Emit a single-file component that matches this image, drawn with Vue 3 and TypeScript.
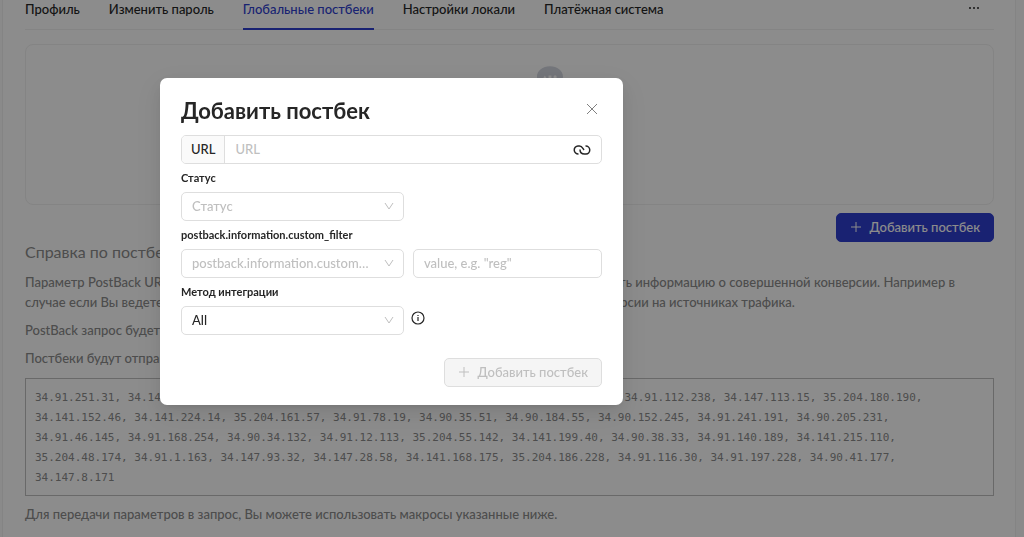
<script setup lang="ts">
import { ref } from 'vue'

interface Tab {
  id: string
  label: string
}

const tabs: Tab[] = [
  { id: 'profile', label: 'Профиль' },
  { id: 'password', label: 'Изменить пароль' },
  { id: 'postbacks', label: 'Глобальные постбеки' },
  { id: 'locale', label: 'Настройки локали' },
  { id: 'payment', label: 'Платёжная система' },
]
const activeTab = ref('postbacks')

const addresses: string[] = [
  '34.91.251.31, 34.141.197.120, 34.141.216.105, 34.90.42.17, 34.147.110.22, 35.204.19.168, 34.91.112.238, 34.147.113.15, 35.204.180.190,',
  '34.141.152.46, 34.141.224.14, 35.204.161.57, 34.91.78.19, 34.90.35.51, 34.90.184.55, 34.90.152.245, 34.91.241.191, 34.90.205.231,',
  '34.91.46.145, 34.91.168.254, 34.90.34.132, 34.91.12.113, 35.204.55.142, 34.141.199.40, 34.90.38.33, 34.91.140.189, 34.141.215.110,',
  '35.204.48.174, 34.91.1.163, 34.147.93.32, 34.147.28.58, 34.141.168.175, 35.204.186.228, 34.91.116.30, 34.91.197.228, 34.90.41.177,',
  '34.147.8.171',
]

const url = ref('')
const status = ref('')
const filter = ref('')
const filterValue = ref('')
const method = ref('all')
</script>

<template>
  <div class="page">
    <main class="panel">
      <nav class="tabs">
        <button
          v-for="tab in tabs"
          :key="tab.id"
          type="button"
          class="tab"
          :class="{ active: tab.id === activeTab }"
          @click="activeTab = tab.id"
        >{{ tab.label }}</button>
        <button type="button" class="more" aria-label="Ещё">
          <svg width="12" height="4" viewBox="0 0 12 4"><circle cx="2" cy="2" r="1" /><circle cx="6" cy="2" r="1" /><circle cx="10" cy="2" r="1" /></svg>
        </button>
      </nav>

      <section class="empty">
        <svg class="art" width="106" height="88" viewBox="0 0 184 152" aria-hidden="true">
          <ellipse cx="92" cy="138" rx="68" ry="13" fill="#f5f5f7" />
          <path d="M122 70 102 45Q100 43 97 43H56Q53 43 51 45L31 70V84H122Z" fill="#aeb8c2" />
          <path d="M34 72H60Q63 72 64 76 65 84 70 84H114Q119 84 120 76 121 72 124 72H150V126Q150 132 144 132H40Q34 132 34 126Z" fill="#dce0e6" />
          <path d="M149.1 33.3 142.3 35.9A1 1 0 0 1 141 34.7L142.9 28.5C140.3 25.6 138.8 22 138.8 18.1 138.8 8.1 148.9 0 161.4 0S184 8.1 184 18.1 173.9 36.2 161.4 36.2C156.9 36.2 152.7 35.1 149.1 33.3Z" fill="#d3d6e0" />
          <circle cx="170.3" cy="18.5" r="2.8" fill="#fff" />
          <path d="M155.4 21H149.6L152.5 16.1ZM158.9 16.1H163.9V21H158.9Z" fill="#fff" />
        </svg>
      </section>

      <div class="actions">
        <button type="button" class="btn primary">
          <svg width="12" height="12" viewBox="0 0 12 12"><path d="M6 1v10M1 6h10" /></svg>
          <span>Добавить постбек</span>
        </button>
      </div>

      <article class="help">
        <h2>Справка по постбекам</h2>
        <p>
          Параметр PostBack URL используется для того, чтоб наша система могла автоматически передавать информацию о совершенной конверсии. Например в<br>
          случае если Вы ведете учёт в собственной системе и хотите видеть у себя все поступившие конверсии на источниках трафика.
        </p>
        <p>PostBack запрос будет отправлен методом GET.</p>
        <p>Постбеки будут отправлены с IP адресов:</p>
        <pre>{{ addresses.join('\n') }}</pre>
        <p>Для передачи параметров в запрос, Вы можете использовать макросы указанные ниже.</p>
      </article>
    </main>

    <div class="overlay">
      <form class="modal" role="dialog" aria-modal="true" aria-labelledby="modal-title" @submit.prevent>
        <header>
          <h1 id="modal-title">Добавить постбек</h1>
          <button type="button" class="close" aria-label="Закрыть">
            <svg width="12" height="12" viewBox="0 0 12 12"><path d="M1 1 11 11M11 1 1 11" /></svg>
          </button>
        </header>

        <div class="url-field">
          <label for="url">URL</label>
          <input id="url" v-model="url" type="text" placeholder="URL">
          <svg width="18" height="12" viewBox="0 0 18 12" aria-hidden="true">
            <path d="M5.500 10A4 4 0 0 1 5 2H6.500C9 2 9.500 4 11 6" />
            <path d="M12.500 2A4 4 0 0 1 13 10H11.500C9 10 7 8.500 7 5.500" />
          </svg>
        </div>

        <label class="caption" for="status">Статус</label>
        <div class="row">
          <div class="select">
            <select id="status" v-model="status" :class="{ blank: !status }">
              <option value="">Статус</option>
            </select>
            <svg width="10" height="8" viewBox="0 0 10 8"><path d="M1 1 5 7 9 1" /></svg>
          </div>
        </div>

        <label class="caption" for="filter">postback.information.custom_filter</label>
        <div class="row">
          <div class="select">
            <select id="filter" v-model="filter" :class="{ blank: !filter }">
              <option value="">postback.information.custom_filter</option>
            </select>
            <svg width="10" height="8" viewBox="0 0 10 8"><path d="M1 1 5 7 9 1" /></svg>
          </div>
          <input v-model="filterValue" class="value" type="text" aria-label="value" placeholder="value, e.g. &quot;reg&quot;">
        </div>

        <label class="caption" for="method">Метод интеграции</label>
        <div class="row hinted">
          <div class="select">
            <select id="method" v-model="method">
              <option value="all">All</option>
            </select>
            <svg width="10" height="8" viewBox="0 0 10 8"><path d="M1 1 5 7 9 1" /></svg>
          </div>
          <svg class="info" width="14" height="14" viewBox="0 0 14 14" aria-hidden="true">
            <circle cx="7" cy="7" r="6" /><path d="M7 6v4M7 4v1" />
          </svg>
        </div>

        <footer>
          <button type="submit" class="btn" disabled>
            <svg width="12" height="12" viewBox="0 0 12 12"><path d="M6 1v10M1 6h10" /></svg>
            <span>Добавить постбек</span>
          </button>
        </footer>
      </form>
    </div>
  </div>
</template>

<style>
body {
  margin: 0;
  overflow: hidden;
}
</style>

<style scoped>
.page {
  min-height: 100vh;
  padding: 0 8px 0 2px;
  font-family: Lato, Roboto, sans-serif;
  font-size: 13px;
  font-weight: 500;
  line-height: 20px;
  color: #262626;
  background: #fcfcfc;
}
*, *::before, *::after { box-sizing: border-box; }
button, input, select { font: inherit; color: inherit; }
svg { flex: none; fill: none; stroke: currentColor; }

.panel {
  min-height: 100vh;
  padding: 0 21px 0 22px;
  border: solid #f0f0f0;
  border-width: 0 1px;
  background: #fff;
}
.tabs {
  display: flex;
  gap: 29px;
  height: 30px;
  border-bottom: 1px solid #f0f0f0;
}
.tab, .more {
  height: 30px;
  padding: 0 0 12px;
  border: 0;
  border-bottom: 2px solid transparent;
  background: none;
  line-height: 18px;
  white-space: nowrap;
}
.tab.active { color: #2f3fd0; border-color: #2f3fd0; }
.more { margin-left: auto; padding-right: 14px; }
.more svg { display: block; fill: currentColor; stroke: none; }

.empty {
  display: flex;
  justify-content: center;
  height: 161px;
  margin-top: 14px;
  padding-top: 21px;
  border: 1px solid #f0f0f0;
  border-radius: 8px;
}
.art { stroke: none; }
.actions { display: flex; justify-content: flex-end; margin-top: 8px; }
.btn {
  display: flex;
  align-items: center;
  gap: 8px;
  height: 29px;
  padding: 0 13px 1px;
  border: 1px solid #dedede;
  border-radius: 5px;
  color: #bfbfbf;
  background: #f5f5f5;
}
.btn.primary { color: #fff; background: #2f3fd0; border-color: #2f3fd0; }

.help { color: #8c8c8c; }
.help h2 { margin: 0; font-size: 16px; font-weight: 400; line-height: 20px; }
.help p { margin: 0 0 8px; white-space: nowrap; }
.help h2 + p { margin-top: 10px; }
.help pre {
  margin: 10px 0 8px;
  padding: 9px 9px 7px;
  border: 1px solid #bfbfbf;
  font: 11px/20px "DejaVu Sans Mono", monospace;
}

.overlay {
  position: fixed;
  inset: 0;
  display: grid;
  grid-template-columns: minmax(0, 160fr) minmax(0, 463fr) minmax(0, 401fr);
  align-items: start;
  padding-top: 78px;
  background: rgba(0, 0, 0, 0.45);
}
.modal {
  grid-column: 2;
  padding: 20px 21px 18px;
  border-radius: 7px;
  background: #fff;
  box-shadow: 0 3px 6px -4px rgba(0, 0, 0, 0.12), 0 6px 16px rgba(0, 0, 0, 0.08), 0 9px 28px 8px rgba(0, 0, 0, 0.05);
}
.modal header { display: flex; align-items: center; justify-content: space-between; height: 25px; margin-bottom: 12px; }
.modal h1 { margin: 0; font-size: 22px; line-height: 25px; font-weight: 700; }
.close { display: flex; padding: 0 4px 4px; border: 0; background: none; color: #808080; }
.url-field {
  display: flex;
  align-items: center;
  height: 29px;
  padding-right: 10px;
  border: 1px solid #dedede;
  border-radius: 5px;
  overflow: hidden;
}
.url-field label {
  align-self: stretch;
  padding: 3px 9px;
  border-right: 1px solid #dedede;
  background: #fafafa;
}
.url-field input { flex: 1; min-width: 0; padding: 0 10px 2px; border: 0; outline: 0; }
.url-field svg { stroke-width: 1.5; }
input::placeholder { color: #bfbfbf; }
.caption { display: block; padding: 4px 0; font-size: 11px; line-height: 20px; font-weight: 700; }
.row { display: flex; align-items: center; gap: 9px; }
.row.hinted { gap: 7px; }
.select { position: relative; flex: 0 0 223px; }
select {
  display: block;
  width: 100%;
  height: 29px;
  padding: 0 32px 1px 10px;
  border: 1px solid #dedede;
  border-radius: 5px;
  appearance: none;
  background: #fff;
  text-overflow: ellipsis;
}
select.blank { color: #bfbfbf; }
.select svg { position: absolute; right: 10px; top: 10px; color: #bfbfbf; }
.value { flex: 1; min-width: 0; height: 29px; padding: 0 10px 2px; border: 1px solid #dedede; border-radius: 5px; }
.info { align-self: flex-start; margin-top: 5px; stroke-width: 1.2; }
.modal footer { display: flex; justify-content: flex-end; margin-top: 23px; }
</style>
